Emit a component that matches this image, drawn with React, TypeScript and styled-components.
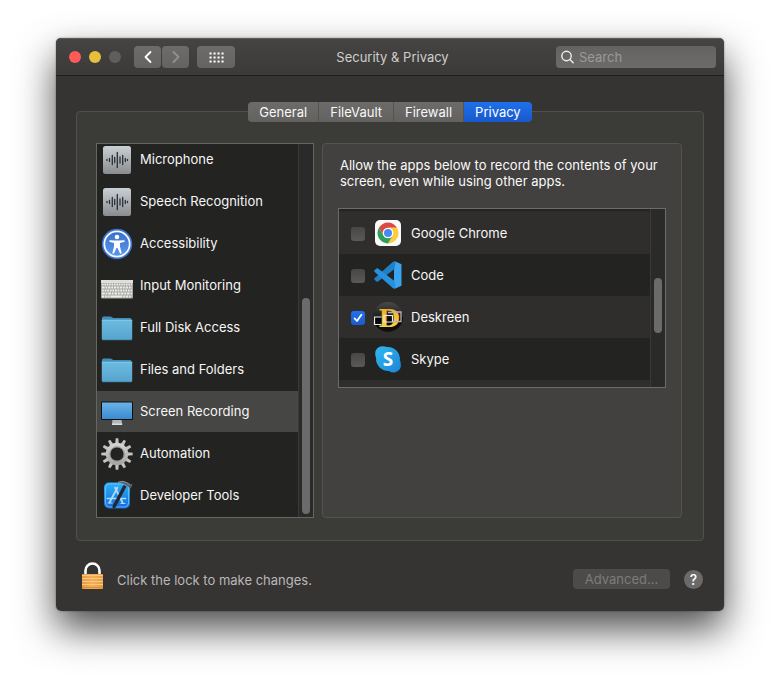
import React from "react";
import styled, { createGlobalStyle, css } from "styled-components";

const GlobalStyle = createGlobalStyle`
  *, *::before, *::after { box-sizing: border-box; }
  body {
    margin: 0;
    background: #ffffff;
    font-family: Inter, "Liberation Sans", sans-serif;
    font-size: 13px;
    line-height: 16px;
    color: #f0f0ef;
  }
  button, input { font: inherit; color: inherit; }
  svg { display: block; flex: none; }
`;

const Desktop = styled.main`
  padding: 38px 56px 74px;
`;

const WindowShadow = styled.div`
  border-radius: 5px;
  box-shadow: 0 0 2px rgba(0, 0, 0, 0.45), 0 18px 38px rgba(0, 0, 0, 0.7);
`;

const Window = styled.section`
  display: flex;
  flex-direction: column;
  border-radius: 5px;
  background: #353433;
  overflow: hidden;
`;

const TitleBar = styled.header`
  display: grid;
  grid-template-columns: 1fr auto 1fr;
  align-items: center;
  height: 38px;
  padding: 0 8px 0 13px;
  background: linear-gradient(#454443, #3b3a39);
  border-top: 1px solid #5c5b5a;
  border-bottom: 1px solid #1f1e1d;
`;

const TitleLeft = styled.div`
  display: flex;
  align-items: center;
`;

const Lights = styled.div`
  display: flex;
  gap: 8px;
  margin-right: 13px;
`;

const Light = styled.button<{ $color: string }>`
  width: 12px;
  height: 12px;
  padding: 0;
  border: 0;
  border-radius: 50%;
  background: ${(p) => p.$color};
`;

const NavGroup = styled.div`
  display: flex;
  gap: 1px;
  margin-right: 8px;
`;

const ToolButton = styled.button<{ $wide?: boolean }>`
  display: flex;
  align-items: center;
  justify-content: center;
  width: ${(p) => (p.$wide ? 38 : 27)}px;
  height: 22px;
  padding: 0;
  border: 0;
  border-radius: 4px;
  background: linear-gradient(#6d6c6b, #646362);
  color: ${(p) => (p.disabled ? "#929190" : "#ffffff")};
`;

const Title = styled.h1`
  margin: 0;
  font-size: 13px;
  font-weight: 400;
  color: #cfcecd;
`;

const SearchField = styled.label`
  display: flex;
  align-items: center;
  justify-self: end;
  gap: 5px;
  width: 160px;
  height: 22px;
  padding: 0 5px;
  border-radius: 4px;
  background: linear-gradient(#646361, #6c6b69);
`;

const SearchInput = styled.input`
  flex: 1;
  min-width: 0;
  padding: 0;
  border: 0;
  outline: 0;
  background: transparent;
  &::placeholder { color: #9a9998; opacity: 1; }
`;

const Content = styled.div`
  display: flex;
  flex-direction: column;
  padding: 26px 20px 21px;
`;

const Tabs = styled.div`
  display: flex;
  align-self: center;
  z-index: 1;
  margin-bottom: -11px;
  border-radius: 4px;
  overflow: hidden;
`;

const Tab = styled.button<{ $active?: boolean }>`
  height: 20px;
  padding: 0 11px;
  border: 0;
  border-right: 1px solid #555453;
  background: linear-gradient(#6c6b6a, #636261);
  color: #f8f8f8;
  &:last-child { border-right: 0; }
  ${(p) =>
    p.$active &&
    css`
      background: linear-gradient(#1f70ea, #1859cc);
      color: #ffffff;
    `}
`;

const Frame = styled.div`
  display: flex;
  gap: 8px;
  padding: 31px 21px 22px 19px;
  border: 1px solid #4f504b;
  border-radius: 4px;
  background: #3b3b38;
`;

const Categories = styled.nav`
  display: flex;
  flex: none;
  width: 218px;
  height: 375px;
  border: 1px solid #666663;
  background: #232322;
  overflow: hidden;
`;

const CategoryList = styled.ul`
  display: flex;
  flex: 1;
  flex-direction: column;
  justify-content: flex-end;
  margin: 0;
  padding: 0;
  list-style: none;
`;

const CategoryItem = styled.li`
  flex: none;
  height: 42px;
`;

const CategoryLink = styled.a<{ $selected?: boolean }>`
  display: flex;
  align-items: center;
  gap: 7px;
  height: 41px;
  padding-left: 4px;
  background: ${(p) => (p.$selected ? "#464645" : "transparent")};
  color: #f6f6f5;
  text-decoration: none;
`;

const CategoryName = styled.span`
  padding-bottom: 2px;
`;

const Track = styled.div<{ $end?: boolean }>`
  display: flex;
  flex: none;
  flex-direction: column;
  align-items: center;
  justify-content: ${(p) => (p.$end ? "flex-end" : "flex-start")};
  width: 15px;
  padding: ${(p) => (p.$end ? "0 0 3px" : "69px 0 0")};
  border-left: 1px solid #3a3a39;
  background: #2a2a2a;
`;

const Thumb = styled.div<{ $length: number }>`
  width: 8px;
  height: ${(p) => p.$length}px;
  border-radius: 4px;
  background: #6b6b6b;
`;

const Panel = styled.section`
  flex: 1;
  min-width: 0;
  padding: 13px 15px;
  border: 1px solid #535351;
  border-radius: 4px;
  background: #424140;
`;

const Explanation = styled.p`
  margin: 0 0 19px;
  padding: 0 2px;
  color: #fafaf9;
`;

const AppBox = styled.div`
  display: flex;
  height: 180px;
  border: 1px solid #6b6b69;
  background: #2f2e2d;
  overflow: hidden;
`;

const AppList = styled.ul`
  flex: 1;
  margin: 0;
  padding: 3px 0 0;
  list-style: none;
  box-shadow: inset 0 2px 1px #232322;
`;

const AppRow = styled.li`
  height: 42px;
  &:nth-child(even) { background: #232322; }
`;

const AppLabel = styled.label`
  display: flex;
  align-items: center;
  height: 42px;
  padding-left: 12px;
  color: #f6f6f5;
  svg { margin: 0 7px; }
`;

const CheckBox = styled.input`
  appearance: none;
  flex: none;
  width: 14px;
  height: 14px;
  margin: 2px 0 0;
  border-radius: 3px;
  background: linear-gradient(#484746, #5a5958);
  &:checked {
    background: url("data:image/svg+xml,%3Csvg xmlns='http://www.w3.org/2000/svg' viewBox='0 0 14 14'%3E%3Cpath d='M3.6 7.4 6 10l4.4-6.2' fill='none' stroke='white' stroke-width='1.8' stroke-linecap='round' stroke-linejoin='round'/%3E%3C/svg%3E"),
      linear-gradient(#2271ec, #1a5bd0);
  }
`;

const Footer = styled.footer`
  display: flex;
  align-items: flex-end;
  justify-content: space-between;
  padding: 21px 1px 0 6px;
`;

const LockButton = styled.button`
  display: flex;
  align-items: flex-end;
  gap: 13px;
  padding: 0;
  border: 0;
  background: transparent;
  color: #b9b8b7;
`;

const LockText = styled.span`
  padding-bottom: 2px;
`;

const Actions = styled.div`
  display: flex;
  align-items: center;
  gap: 14px;
  padding-bottom: 1px;
`;

const AdvancedButton = styled.button`
  width: 97px;
  height: 20px;
  padding: 0;
  border: 0;
  border-radius: 4px;
  background: #4c4b4a;
  color: #7d7c7b;
`;

const HelpButton = styled.button`
  width: 19px;
  height: 19px;
  padding: 0;
  border: 0;
  border-radius: 50%;
  background: #6b6a69;
  font-size: 14px;
  font-weight: 500;
  line-height: 19px;
  color: #ffffff;
`;

const WaveIcon = () => (
  <svg width="32" height="32" viewBox="0 0 32 32" aria-hidden="true">
    <defs>
      <linearGradient id="wave" x1="0" y1="0" x2="0" y2="1">
        <stop offset="0" stopColor="#c9d0d4" />
        <stop offset="1" stopColor="#8a8d90" />
      </linearGradient>
    </defs>
    <rect x="2" y="2" width="28" height="28" rx="2.5" fill="url(#wave)" />
    <path
      d="M6 15.5v1M8.500 14.500v3M11.300 11.500v9M13.700 13.500v5M16.300 8.500v15M19 13v6M21.700 11.500v9M24.300 14.500v3M26.500 15.500v1"
      stroke="#2a2f36"
      strokeWidth="1.3"
      strokeLinecap="round"
    />
  </svg>
);

const AccessibilityIcon = () => (
  <svg width="32" height="32" viewBox="0 0 32 32" aria-hidden="true">
    <defs>
      <linearGradient id="access" x1="0" y1="0" x2="0" y2="1">
        <stop offset="0" stopColor="#3c6fc8" />
        <stop offset="1" stopColor="#5b97ee" />
      </linearGradient>
    </defs>
    <circle cx="16" cy="16" r="15.200" fill="#3a74d0" />
    <circle cx="16" cy="16" r="12.700" fill="url(#access)" stroke="#f4f8ff" strokeWidth="1.800" />
    <circle cx="16" cy="9" r="2.300" fill="#fff" />
    <path
      d="M8.500 12.300 14 12.600h4l5.500-.3.200 1.500-4.700 1.200v3.500l1.700 6.800-1.600.5L16.500 20h-1l-2.600 5.800-1.600-.5 1.700-6.800V15l-4.700-1.200z"
      fill="#fff"
    />
  </svg>
);

const KeyboardIcon = () => (
  <svg width="32" height="32" viewBox="0 0 32 32" aria-hidden="true">
    <rect x="0" y="10" width="32" height="18.500" rx="1" fill="#a6a6a3" />
    <rect x="0" y="10" width="32" height="3" fill="#dededb" />
    <g stroke="#ecece9" strokeWidth="2.100">
      <path d="M1 14.500h30" strokeDasharray="1.600 .8" />
      <path d="M1 17.500h30" strokeDasharray="2.600 .8 1.700 .8" />
      <path d="M1 20.500h30" strokeDasharray="1.800 .8" />
      <path d="M1 23.500h30" strokeDasharray="2.800 .8 1.800 .8" />
      <path d="M1 26.500h30" strokeDasharray="2 .8 2 .8 2 .8 12 .8" />
    </g>
  </svg>
);

const FolderIcon = () => (
  <svg width="32" height="32" viewBox="0 0 32 32" aria-hidden="true">
    <defs>
      <linearGradient id="folder" x1="0" y1="0" x2="0" y2="1">
        <stop offset="0" stopColor="#6cbbdf" />
        <stop offset="1" stopColor="#56a4cd" />
      </linearGradient>
    </defs>
    <path d="M1 6q0-1.500 1.500-1.500h6.800q1 0 1.700.8t1.700.8H29q1.500 0 1.500 1.500V10H1z" fill="#3f8fb8" />
    <path d="M.8 8h30.400V26.500q0 1.500-1.500 1.500H2.300Q.8 28 .8 26.500z" fill="url(#folder)" />
    <path d="M.8 8.200h30.400" stroke="#8ed0ee" strokeWidth=".8" />
    <path d="M1.300 27.800h29.400" stroke="#3f87ae" strokeWidth=".8" />
  </svg>
);

const MonitorIcon = () => (
  <svg width="32" height="32" viewBox="0 0 32 32" aria-hidden="true">
    <defs>
      <linearGradient id="screen" x1="0" y1="0" x2="0" y2="1">
        <stop offset="0" stopColor="#6bb2e8" />
        <stop offset="1" stopColor="#3a8bd0" />
      </linearGradient>
    </defs>
    <path d="M11.500 23h9l.6 5.500H11z" fill="#b5b5b5" />
    <path d="M11 27.500h10.200V29H11z" fill="#dcdcdc" />
    <rect x="0" y="5.500" width="32" height="18.500" rx="1" fill="#111" />
    <rect x="1" y="6.500" width="30" height="16.500" fill="url(#screen)" />
  </svg>
);

const teeth = Array.from({ length: 12 }, (_, i) => i * 30);

const GearIcon = () => (
  <svg width="32" height="32" viewBox="0 0 32 32" aria-hidden="true">
    <defs>
      <linearGradient id="gear" x1="0" y1="0" x2="0" y2="1">
        <stop offset="0" stopColor="#d2d2d0" />
        <stop offset="1" stopColor="#a8a8a6" />
      </linearGradient>
    </defs>
    <g fill="#c4c4c2">
      {teeth.map((angle) => (
        <path key={angle} d="M14.200 6 14.700.3h2.600L17.800 6z" transform={`rotate(${angle} 16 16)`} />
      ))}
    </g>
    <circle cx="16" cy="16" r="9" fill="none" stroke="url(#gear)" strokeWidth="4.400" />
    <circle cx="16" cy="16" r="7.200" fill="none" stroke="#858584" strokeWidth=".8" />
  </svg>
);

const ToolsIcon = () => (
  <svg width="32" height="32" viewBox="0 0 32 32" aria-hidden="true">
    <defs>
      <linearGradient id="tools" x1="0" y1="0" x2="0" y2="1">
        <stop offset="0" stopColor="#2fb0f5" />
        <stop offset="1" stopColor="#1769dc" />
      </linearGradient>
    </defs>
    <rect x="3" y="2.500" width="26" height="26" rx="5" fill="url(#tools)" />
    <rect x="4.500" y="4" width="23" height="23" rx="4" fill="none" stroke="#69c9fa" strokeWidth=".8" />
    <g fill="none" stroke="#a9dffd" strokeWidth="1.700" strokeLinecap="round">
      <path d="M14 7.500 21.500 22.500M16.500 7.500 8.500 22.500M6.500 18.500h10M20 18.500h4.500" />
      <path d="M7 23h4M20 23.500h4" strokeWidth="1.200" />
    </g>
    <path d="M22.500 5 25.500 6.500 14.500 27.500q-.8 1.400-2.200.8t-.8-2.200z" fill="#23272e" />
    <path d="M16.500 2.500q4.500-2.800 9-.3l3.500 2 1.500-.4 1 1-1.800 3.700-1.500-.3-.4-1.500-5.500-2.900q-2-1.100-5.800-1.300z" fill="#5c6066" />
    <path d="M17 2.300q4.500-2.200 8.500.3l3.500 2" stroke="#a9adb2" strokeWidth=".7" fill="none" />
  </svg>
);

const ChromeIcon = () => (
  <svg width="32" height="32" viewBox="0 0 32 32" aria-hidden="true">
    <rect x="3" y="3" width="26" height="26" rx="5" fill="#fafafa" />
    <g transform="translate(16 16)">
      <path d="M-9.090-5.250A10.500 10.500 0 0 1 9.090-5.250H0A5.250 5.250 0 0 0-4.550 2.630z" fill="#dc4a3e" />
      <path d="M9.090-5.250A10.500 10.500 0 0 1 0 10.500L4.550 2.630A5.250 5.250 0 0 0 0-5.250z" fill="#fbcd3d" />
      <path d="M0 10.500A10.500 10.500 0 0 1-9.090-5.250L-4.550 2.630A5.250 5.250 0 0 0 4.550 2.630z" fill="#2f9e58" />
      <circle r="5" fill="#fff" />
      <circle r="4" fill="#4a87ee" />
    </g>
  </svg>
);

const CodeIcon = () => (
  <svg width="32" height="32" viewBox="0 0 32 32" aria-hidden="true">
    <path d="M23.500 2.500 29.500 5.300V26.700L23.500 29.500 22 28V4z" fill="#3aa4ee" />
    <path d="M23.500 2.500 22.500 10 6 22.500q-.8.600-1.500 0L2.500 20.800q-.8-.8 0-1.600L20.700 3q1.400-1.100 2.800-.5z" fill="#1f7fc9" />
    <path d="M23.500 29.500 22.500 22 6 9.500q-.8-.6-1.500 0L2.500 11.200q-.8.800 0 1.600L20.700 29q1.400 1.100 2.800.5z" fill="#2691dc" />
  </svg>
);

const DeskreenIcon = () => (
  <svg width="32" height="32" viewBox="0 0 32 32" aria-hidden="true">
    <defs>
      <linearGradient id="disc" x1="0" y1="0" x2="0" y2="1">
        <stop offset="0" stopColor="#4a4a4a" />
        <stop offset=".5" stopColor="#1c1c1c" />
        <stop offset=".55" stopColor="#050505" />
        <stop offset="1" stopColor="#111" />
      </linearGradient>
      <linearGradient id="letter" x1="0" y1="0" x2="0" y2="1">
        <stop offset="0" stopColor="#eba51f" />
        <stop offset="1" stopColor="#fae04c" />
      </linearGradient>
    </defs>
    <circle cx="16" cy="16" r="15" fill="url(#disc)" />
    <text x="17" y="25.500" textAnchor="middle" fontFamily="DejaVu Serif, serif" fontWeight="700" fontSize="25" fill="url(#letter)">D</text>
    <path d="M9.500 16H2.500v7.500h7M12 14.500h8.500V21H12z" fill="none" stroke="#eeeaee" strokeWidth="1.200" />
    <path d="M20.500 11H29v9.500h-8.500M16 11.500h4.500" fill="none" stroke="#b9b2bb" strokeWidth="1.300" />
  </svg>
);

const SkypeIcon = () => (
  <svg width="32" height="32" viewBox="0 0 32 32" aria-hidden="true">
    <defs>
      <linearGradient id="skype" x1="0" y1="0" x2="1" y2="1" gradientUnits="objectBoundingBox">
        <stop offset="0" stopColor="#33b8f0" />
        <stop offset="1" stopColor="#1985d8" />
      </linearGradient>
    </defs>
    <path
      d="M10.500 3.200Q13 3.200 15 4.100A12 12 0 0 1 27.900 17Q28.800 19 28.800 21.500A7.300 7.300 0 0 1 17 27.900 12 12 0 0 1 4.100 15Q3.200 13 3.200 10.500A7.300 7.300 0 0 1 10.500 3.200z"
      fill="url(#skype)"
    />
    <text x="16" y="22.500" textAnchor="middle" fontFamily="Open Sans, sans-serif" fontWeight="700" fontSize="19" fill="#fff">S</text>
  </svg>
);

const LockIcon = () => (
  <svg width="22" height="28" viewBox="0 0 22 28" aria-hidden="true">
    <defs>
      <linearGradient id="brass" x1="0" y1="0" x2="1" y2="0">
        <stop offset="0" stopColor="#e69c40" />
        <stop offset=".5" stopColor="#f3b058" />
        <stop offset="1" stopColor="#e69c40" />
      </linearGradient>
    </defs>
    <path d="M3.500 13V8.500a7 7 0 0 1 14 0V13" fill="none" stroke="#fff" strokeWidth="2.600" />
    <rect x="0" y="12" width="21" height="15" rx=".8" fill="url(#brass)" />
    <path d="M0 13.500h21M0 16.500h21M0 19.500h21M0 22.500h21" stroke="#f9c983" strokeWidth="1" />
    <path d="M0 25.500h21" stroke="#dd8f33" strokeWidth="1" />
  </svg>
);

const Chevron = ({ d }: { d: string }) => (
  <svg width="12" height="14" viewBox="0 0 12 14" fill="none" stroke="currentColor" strokeWidth="1.800" strokeLinecap="round" strokeLinejoin="round" aria-hidden="true">
    <path d={d} />
  </svg>
);

const GridIcon = () => (
  <svg width="15" height="11" viewBox="0 0 15 11" fill="#fff" aria-hidden="true">
    {[0, 4, 8].map((y) =>
      [0, 4, 8, 12].map((x) => <rect key={`${x}-${y}`} x={x + 0.5} y={y + 0.5} width="2.100" height="2.100" rx=".3" />)
    )}
  </svg>
);

const SearchIcon = () => (
  <svg width="13" height="14" viewBox="0 0 13 14" fill="none" stroke="#efefee" strokeWidth="1.400" strokeLinecap="round" aria-hidden="true">
    <circle cx="5.500" cy="6" r="4.700" />
    <path d="m9 9.600 3.200 3.200" />
  </svg>
);

const categories = [
  { name: "Microphone", Icon: WaveIcon },
  { name: "Speech Recognition", Icon: WaveIcon },
  { name: "Accessibility", Icon: AccessibilityIcon },
  { name: "Input Monitoring", Icon: KeyboardIcon },
  { name: "Full Disk Access", Icon: FolderIcon },
  { name: "Files and Folders", Icon: FolderIcon },
  { name: "Screen Recording", Icon: MonitorIcon },
  { name: "Automation", Icon: GearIcon },
  { name: "Developer Tools", Icon: ToolsIcon },
];

const apps = [
  { name: "Google Chrome", Icon: ChromeIcon, allowed: false },
  { name: "Code", Icon: CodeIcon, allowed: false },
  { name: "Deskreen", Icon: DeskreenIcon, allowed: true },
  { name: "Skype", Icon: SkypeIcon, allowed: false },
];

export default function App() {
  return (
    <Desktop>
      <GlobalStyle />
      <WindowShadow>
        <Window>
          <TitleBar>
            <TitleLeft>
              <Lights>
                <Light $color="#fc5b57" aria-label="Close" />
                <Light $color="#e6bf3c" aria-label="Minimize" />
                <Light $color="#5f5e5d" aria-label="Zoom" disabled />
              </Lights>
              <NavGroup>
                <ToolButton aria-label="Back"><Chevron d="M8.500 2 3.500 7l5 5" /></ToolButton>
                <ToolButton aria-label="Forward" disabled><Chevron d="m3.500 2 5 5-5 5" /></ToolButton>
              </NavGroup>
              <ToolButton $wide aria-label="Show all"><GridIcon /></ToolButton>
            </TitleLeft>
            <Title>Security &amp; Privacy</Title>
            <SearchField>
              <SearchIcon />
              <SearchInput type="text" placeholder="Search" aria-label="Search" />
            </SearchField>
          </TitleBar>
          <Content>
            <Tabs role="tablist">
              {["General", "FileVault", "Firewall", "Privacy"].map((tab) => (
                <Tab key={tab} role="tab" $active={tab === "Privacy"} aria-selected={tab === "Privacy"}>{tab}</Tab>
              ))}
            </Tabs>
            <Frame>
              <Categories aria-label="Privacy categories">
                <CategoryList>
                  {categories.map(({ name, Icon }) => (
                    <CategoryItem key={name}>
                      <CategoryLink href="#" $selected={name === "Screen Recording"}>
                        <Icon />
                        <CategoryName>{name}</CategoryName>
                      </CategoryLink>
                    </CategoryItem>
                  ))}
                </CategoryList>
                <Track $end aria-hidden="true"><Thumb $length={216} /></Track>
              </Categories>
              <Panel>
                <Explanation>
                  Allow the apps below to record the contents of your screen, even while using other apps.
                </Explanation>
                <AppBox>
                  <AppList>
                    {apps.map(({ name, Icon, allowed }) => (
                      <AppRow key={name}>
                        <AppLabel>
                          <CheckBox type="checkbox" defaultChecked={allowed} />
                          <Icon />
                          {name}
                        </AppLabel>
                      </AppRow>
                    ))}
                  </AppList>
                  <Track aria-hidden="true"><Thumb $length={55} /></Track>
                </AppBox>
              </Panel>
            </Frame>
            <Footer>
              <LockButton>
                <LockIcon />
                <LockText>Click the lock to make changes.</LockText>
              </LockButton>
              <Actions>
                <AdvancedButton disabled>Advanced...</AdvancedButton>
                <HelpButton aria-label="Help">?</HelpButton>
              </Actions>
            </Footer>
          </Content>
        </Window>
      </WindowShadow>
    </Desktop>
  );
}
